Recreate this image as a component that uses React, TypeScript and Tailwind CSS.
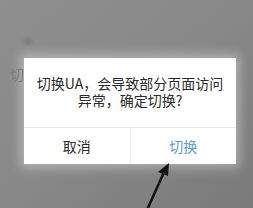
export default function App() {
  return (
    <main
      className="relative w-[253px] h-[208px] overflow-hidden bg-gradient-to-br from-[#8f8f8f] via-[#888888] to-[#7a7a7a]"
      style={{ fontFamily: '"Noto Sans CJK SC", "Noto Sans", sans-serif' }}
    >
      {/* faint page content behind the overlay */}
      <div className="absolute left-[24px] top-[37px] w-[8px] h-[8px] rounded-full bg-[#7f7f7f] blur-[1px]" />
      <div className="absolute left-[10px] top-[64px] text-[14px] text-[#7d7d7d] blur-[0.6px]">切</div>

      <div className="pt-[58px] pl-[24px] flex">
        <div className="w-[212px] bg-white shadow-[0_0_10px_4px_rgba(255,255,255,0.35)]">
          <div className="h-[69px] flex flex-col items-center justify-center text-[14px] leading-[17px] text-[#2a2a2a] text-center pb-[2px]">
            <p>切换UA，会导致部分页面访问</p>
            <p>异常，确定切换?</p>
          </div>
          <div className="flex h-[37px] border-t border-[#e6e6e6]">
            <button className="flex-1 text-[14px] text-[#2a2a2a] border-r border-[#ececec]">取消</button>
            <button className="flex-1 text-[14px] text-[#5b9bd8]">切换</button>
          </div>
        </div>
      </div>

      <svg className="absolute left-0 top-0" width="253" height="208" viewBox="0 0 253 208">
        <line x1="147" y1="210" x2="165" y2="170" stroke="#111" strokeWidth="2.5" />
        <polygon points="169,163 158,172 168,176" fill="#111" />
      </svg>
    </main>
  )
}
